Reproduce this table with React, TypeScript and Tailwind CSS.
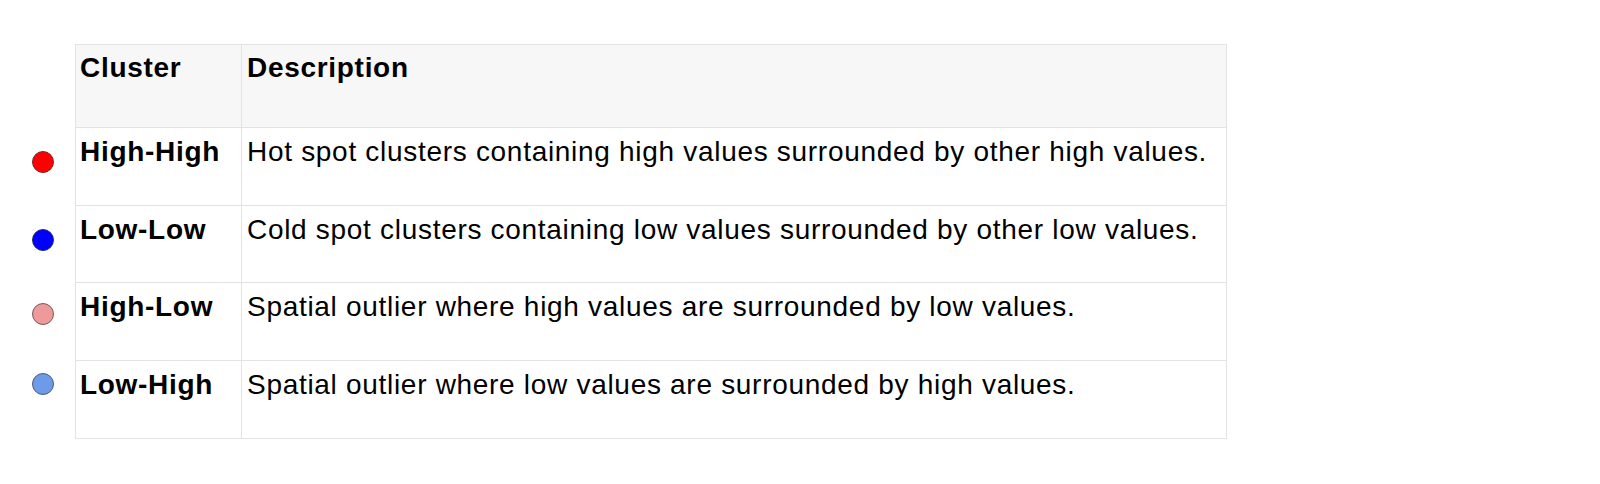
const rows = [
  {
    name: "High-High",
    desc: "Hot spot clusters containing high values surrounded by other high values.",
    dot: "bg-[#ff0000] border-[#7a2a2a]",
    h: "h-[78px]",
    mt: "mt-[24px]",
  },
  {
    name: "Low-Low",
    desc: "Cold spot clusters containing low values surrounded by other low values.",
    dot: "bg-[#0000ff] border-[#2a2a6a]",
    h: "h-[77px]",
    mt: "mt-[24px]",
  },
  {
    name: "High-Low",
    desc: "Spatial outlier where high values are surrounded by low values.",
    dot: "bg-[#ee9a9a] border-[#7a5858]",
    h: "h-[78px]",
    mt: "mt-[21px]",
  },
  {
    name: "Low-High",
    desc: "Spatial outlier where low values are surrounded by high values.",
    dot: "bg-[#6e9be8] border-[#4a5a78]",
    h: "h-[79px] border-b",
    mt: "mt-[13px]",
  },
];

export default function App() {
  return (
    <div className="w-[1600px] h-[484px] bg-white pt-[44px] font-['Liberation_Sans',Arial,sans-serif] text-[28px] leading-[32px] tracking-[0.7px] text-black">
      {/* Header */}
      <div className="flex">
        <div className="w-[75px] shrink-0" />
        <div className="flex h-[83px] bg-[#f7f7f7]">
          <div className="w-[166px] border-l border-t border-[#e3e3e3] pl-[4px] pt-[7px] font-bold">
            Cluster
          </div>
          <div className="w-[986px] border-l border-r border-t border-[#e3e3e3] pl-[5px] pt-[7px] font-bold">
            Description
          </div>
        </div>
      </div>

      {/* Rows */}
      {rows.map((r) => (
        <div key={r.name} className="flex">
          <div className="w-[75px] shrink-0 pl-[32px]">
            <div className={`w-[22px] h-[22px] rounded-full border ${r.dot} ${r.mt}`} />
          </div>
          <div className={`flex border-[#e3e3e3] ${r.h}`}>
            <div className="w-[166px] border-l border-t border-[#e3e3e3] pl-[4px] pt-[8px] font-bold">
              {r.name}
            </div>
            <div className="w-[986px] border-l border-r border-t border-[#e3e3e3] pl-[5px] pt-[8px]">
              {r.desc}
            </div>
          </div>
        </div>
      ))}
    </div>
  );
}
